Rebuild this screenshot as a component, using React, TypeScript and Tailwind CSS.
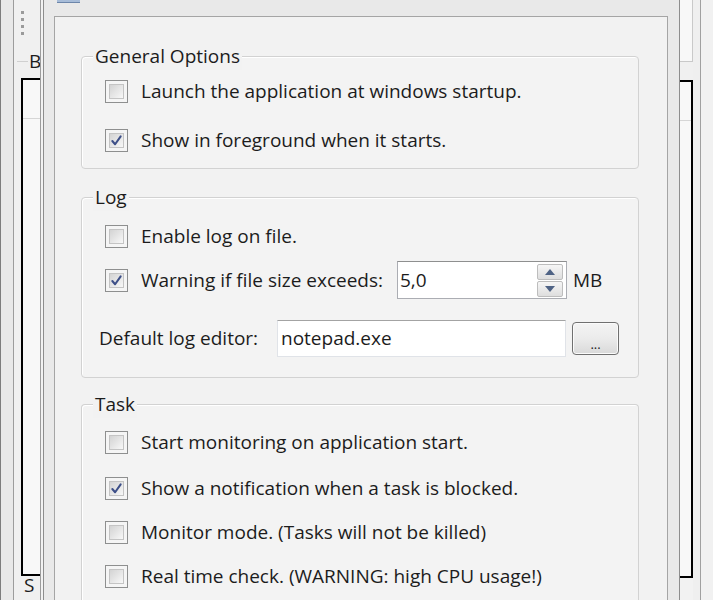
import type { ReactNode } from 'react';

// Old-style Windows options dialog, sitting over a partially visible main window.

function Check({ checked }: { checked?: boolean }) {
  return (
    <div className="h-[23px] w-[23px] shrink-0 border border-[#8e8f8f] bg-[#f5f5f5] p-[3px]">
      <div className="grid h-full w-full place-items-center border border-[#c4c4c4] bg-gradient-to-br from-[#d3d3d3] to-[#f8f8f8]">
        {checked && (
          <svg viewBox="0 0 14 14" className="h-[13px] w-[13px]" fill="none" stroke="#3d4f88" strokeWidth={2.2} strokeLinecap="round" strokeLinejoin="round">
            <path d="M2.5 7.5 L5.5 11 L11.5 2.5" />
          </svg>
        )}
      </div>
    </div>
  );
}

function CheckRow({ checked, label, className = '' }: { checked?: boolean; label: string; className?: string }) {
  return (
    <div className={`flex items-center pl-[23px] ${className}`}>
      <Check checked={checked} />
      <span className="ml-[13px] whitespace-nowrap">{label}</span>
    </div>
  );
}

function Group({ title, className = '', children }: { title: string; className?: string; children: ReactNode }) {
  return (
    <div className={`flex flex-col rounded-[4px] border border-[#d2d2d2] bg-[#f3f3f3] shadow-[inset_1px_1px_0_#ffffff] ${className}`}>
      <span className="-mt-[14px] ml-[11px] h-[27px] self-start bg-[#f2f2f2] px-[2px] leading-[27px]">{title}</span>
      {children}
    </div>
  );
}

function SpinBox() {
  return (
    <div className="flex h-[38px] w-[170px] items-center border border-[#abadb3] border-t-[#8e8f8f] bg-white pl-[2px] pr-[3px]">
      <span className="flex-1">5,0</span>
      <div className="flex flex-col gap-[1px]">
        <div className="grid h-[16px] w-[26px] place-items-center rounded-[2px] border border-[#bdbdbd] bg-gradient-to-b from-[#f6f6f6] to-[#dedede]">
          <svg viewBox="0 0 10 6" className="h-[6px] w-[10px]"><path d="M0 6 L5 0 L10 6 Z" fill="#4f6385" /></svg>
        </div>
        <div className="grid h-[16px] w-[26px] place-items-center rounded-[2px] border border-[#bdbdbd] bg-gradient-to-b from-[#f6f6f6] to-[#dedede]">
          <svg viewBox="0 0 10 6" className="h-[6px] w-[10px]"><path d="M0 0 L10 0 L5 6 Z" fill="#4f6385" /></svg>
        </div>
      </div>
    </div>
  );
}

function LeftWindow() {
  return (
    <div className="flex h-full w-[43px] shrink-0">
      <div className="w-[13px] border-l border-[#7d7d7d] bg-[#e8e8e8]" />
      <div className="w-px bg-[#9c9c9c]" />
      <div className="flex w-[26px] flex-col overflow-hidden bg-[#f0f0f0]">
        <div className="ml-[7px] mt-[11px] flex flex-col gap-[4px]">
          <div className="h-[3px] w-[3px] bg-[#9a9a9a]" />
          <div className="h-[3px] w-[3px] bg-[#9a9a9a]" />
          <div className="h-[3px] w-[3px] bg-[#9a9a9a]" />
          <div className="h-[3px] w-[3px] bg-[#9a9a9a]" />
        </div>
        <div className="mt-[18px] flex h-[16px] items-center whitespace-nowrap">
          <div className="ml-[3px] h-px w-[11px] shrink-0 bg-[#d0d0d0]" />
          <span className="ml-[1px] shrink-0 leading-none">B</span>
        </div>
        <div className="ml-[7px] mt-[9px] flex h-[498px] shrink-0 flex-col border-y-2 border-l-2 border-black bg-[#f8f8f8]">
          <div className="mt-[38px] h-px bg-[#d6d6d6]" />
        </div>
        <span className="ml-[10px] leading-none">S</span>
      </div>
      <div className="w-px bg-[#9c9c9c]" />
      <div className="w-[2px] bg-[#f2f2f2]" />
    </div>
  );
}

function RightWindow() {
  return (
    <div className="flex h-full w-[33px] shrink-0">
      <div className="flex w-[13px] flex-col">
        <div className="h-[62px] border-b border-r border-[#c9c9c9] bg-[#f8f8f8]" />
        <div className="h-[18px] bg-[#f0f0f0]" />
        <div className="h-[498px] border-y-2 border-r-2 border-black bg-[#f8f8f8]">
          <div className="mt-[38px] h-px bg-[#d6d6d6]" />
        </div>
        <div className="flex-1 bg-[#f2f2f2]" />
      </div>
      <div className="w-[7px] bg-[#efefef]" />
      <div className="w-px bg-[#a0a0a0]" />
      <div className="w-[12px] bg-[#f1f1f1]" />
    </div>
  );
}

export default function App() {
  return (
    <div className="flex h-[600px] w-[713px] overflow-hidden bg-[#f0f0f0] font-['Open_Sans',sans-serif] text-[19px] text-[#1c1c1c]">
      <LeftWindow />

      {/* Dialog */}
      <div className="flex w-[637px] shrink-0 flex-col border-x border-[#8d8d8d] bg-[#e9e9e9] pl-[10px] pr-[11px]">
        <div className="h-[16px]">
          <div className="ml-[3px] h-[3px] w-[23px] border-b border-[#6d86aa] bg-[#a7bcd8]" />
        </div>
        <div className="flex flex-1 flex-col border-x border-t border-[#a5a5a5] bg-[#f2f2f2] pl-[26px] pr-[28px]">
          <Group title="General Options" className="mt-[39px]">
            <CheckRow label="Launch the application at windows startup." className="h-[42px]" />
            <CheckRow checked label="Show in foreground when it starts." className="h-[56px]" />
          </Group>

          <Group title="Log" className="mt-[28px]">
            <CheckRow label="Enable log on file." className="h-[50px]" />
            <div className="flex h-[38px] items-center pl-[23px]">
              <Check checked />
              <span className="ml-[13px] w-[256px] whitespace-nowrap">Warning if file size exceeds:</span>
              <SpinBox />
              <span className="ml-[6px]">MB</span>
            </div>
            <div className="flex h-[78px] items-center pl-[17px]">
              <span className="w-[178px] whitespace-nowrap">Default log editor:</span>
              <div className="flex h-[37px] w-[289px] items-center border border-[#e0e3e8] border-t-[#a3a3a3] bg-white pl-[3px]">
                notepad.exe
              </div>
              <button className="ml-[6px] flex h-[33px] w-[47px] items-end justify-center rounded-[4px] border border-[#707070] bg-gradient-to-b from-[#f4f4f4] via-[#ebebeb] to-[#d9d9d9] pb-[3px] text-[13px] leading-none shadow-[inset_0_0_0_1px_#fbfbfb]">
                ...
              </button>
            </div>
          </Group>

          <Group title="Task" className="mt-[26px] flex-1 rounded-b-none border-b-0">
            <CheckRow label="Start monitoring on application start." className="h-[48px]" />
            <CheckRow checked label="Show a notification when a task is blocked." className="h-[44px]" />
            <CheckRow label="Monitor mode. (Tasks will not be killed)" className="h-[44px]" />
            <CheckRow label="Real time check. (WARNING: high CPU usage!)" className="h-[44px]" />
          </Group>
        </div>
      </div>

      <RightWindow />
    </div>
  );
}
